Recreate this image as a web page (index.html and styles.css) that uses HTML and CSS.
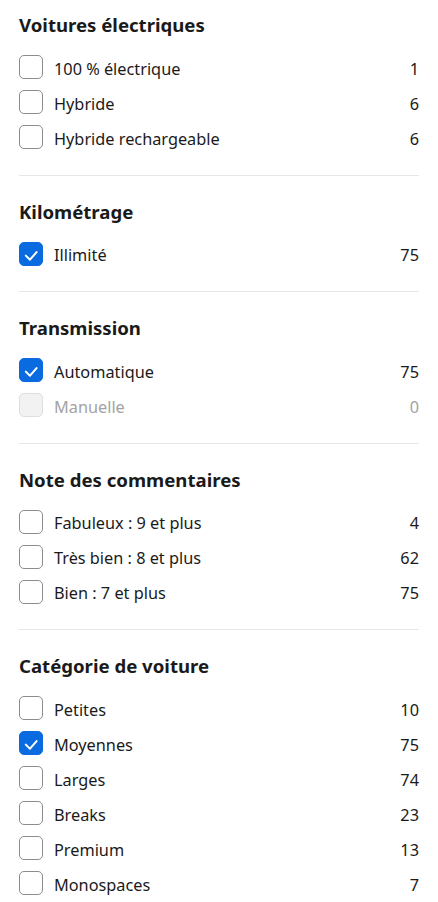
FILE: index.html
```html
<!DOCTYPE html>
<html lang="fr">
<head>
<meta charset="utf-8">
<link rel="stylesheet" href="styles.css">
</head>
<body>
<div class="filters">
  <section class="group">
    <h3 class="title">Voitures électriques</h3>
    <ul class="list">
      <li class="row"><span class="box"></span><span class="label">100 % électrique</span><span class="count">1</span></li>
      <li class="row"><span class="box"></span><span class="label">Hybride</span><span class="count">6</span></li>
      <li class="row"><span class="box"></span><span class="label">Hybride rechargeable</span><span class="count">6</span></li>
    </ul>
  </section>
  <section class="group">
    <h3 class="title">Kilométrage</h3>
    <ul class="list">
      <li class="row"><span class="box checked"><svg viewBox="0 0 24 24" width="24" height="24"><path d="M6.8 13.6l4.2 4.1 6.6-7.6" fill="none" stroke="#fff" stroke-width="2" stroke-linecap="round" stroke-linejoin="round"/></svg></span><span class="label">Illimité</span><span class="count">75</span></li>
    </ul>
  </section>
  <section class="group">
    <h3 class="title">Transmission</h3>
    <ul class="list">
      <li class="row"><span class="box checked"><svg viewBox="0 0 24 24" width="24" height="24"><path d="M6.8 13.6l4.2 4.1 6.6-7.6" fill="none" stroke="#fff" stroke-width="2" stroke-linecap="round" stroke-linejoin="round"/></svg></span><span class="label">Automatique</span><span class="count">75</span></li>
      <li class="row disabled"><span class="box"></span><span class="label">Manuelle</span><span class="count">0</span></li>
    </ul>
  </section>
  <section class="group">
    <h3 class="title">Note des commentaires</h3>
    <ul class="list">
      <li class="row"><span class="box"></span><span class="label">Fabuleux : 9 et plus</span><span class="count">4</span></li>
      <li class="row"><span class="box"></span><span class="label">Très bien : 8 et plus</span><span class="count">62</span></li>
      <li class="row"><span class="box"></span><span class="label">Bien : 7 et plus</span><span class="count">75</span></li>
    </ul>
  </section>
  <section class="group">
    <h3 class="title">Catégorie de voiture</h3>
    <ul class="list">
      <li class="row"><span class="box"></span><span class="label">Petites</span><span class="count">10</span></li>
      <li class="row"><span class="box checked"><svg viewBox="0 0 24 24" width="24" height="24"><path d="M6.8 13.6l4.2 4.1 6.6-7.6" fill="none" stroke="#fff" stroke-width="2" stroke-linecap="round" stroke-linejoin="round"/></svg></span><span class="label">Moyennes</span><span class="count">75</span></li>
      <li class="row"><span class="box"></span><span class="label">Larges</span><span class="count">74</span></li>
      <li class="row"><span class="box"></span><span class="label">Breaks</span><span class="count">23</span></li>
      <li class="row"><span class="box"></span><span class="label">Premium</span><span class="count">13</span></li>
      <li class="row"><span class="box"></span><span class="label">Monospaces</span><span class="count">7</span></li>
    </ul>
  </section>
</div>
</body>
</html>
```
FILE: styles.css
```css
* { box-sizing: border-box; }
html, body { margin: 0; padding: 0; background: #fff; }
body {
  font-family: "Noto Sans", "Open Sans", sans-serif;
  color: #1a1a1a;
}
.filters {
  padding: 13px 19px 0 19px;
}
.group {
  padding-bottom: 20px;
  border-bottom: 1px solid #e6e6e6;
  margin-bottom: 24px;
}
.title {
  margin: 0 0 12.5px 0;
  font-size: 18.6px;
  line-height: 24px;
  font-weight: 700;
  color: #1a1a1a;
}
.list {
  list-style: none;
  margin: 0;
  padding: 0;
}
.row {
  display: flex;
  align-items: center;
  height: 35px;
  font-size: 16.3px;
}
.box {
  flex: none;
  width: 24px;
  height: 24px;
  border: 1px solid #8c8c8c;
  border-radius: 5px;
  margin-right: 11px;
  background: #fff;
}
.box.checked {
  background: #0a6be0;
  border-color: #0a6be0;
  display: flex;
  align-items: center;
  justify-content: center;
}
.box.checked svg { display: block; margin: -1px; }
.label { flex: 1; padding-top: 3px; }
.count { text-align: right; padding-top: 3px; }
.disabled { color: #a3a3a3; }
.disabled .box { background: #f2f2f2; border-color: #dedede; }
```
